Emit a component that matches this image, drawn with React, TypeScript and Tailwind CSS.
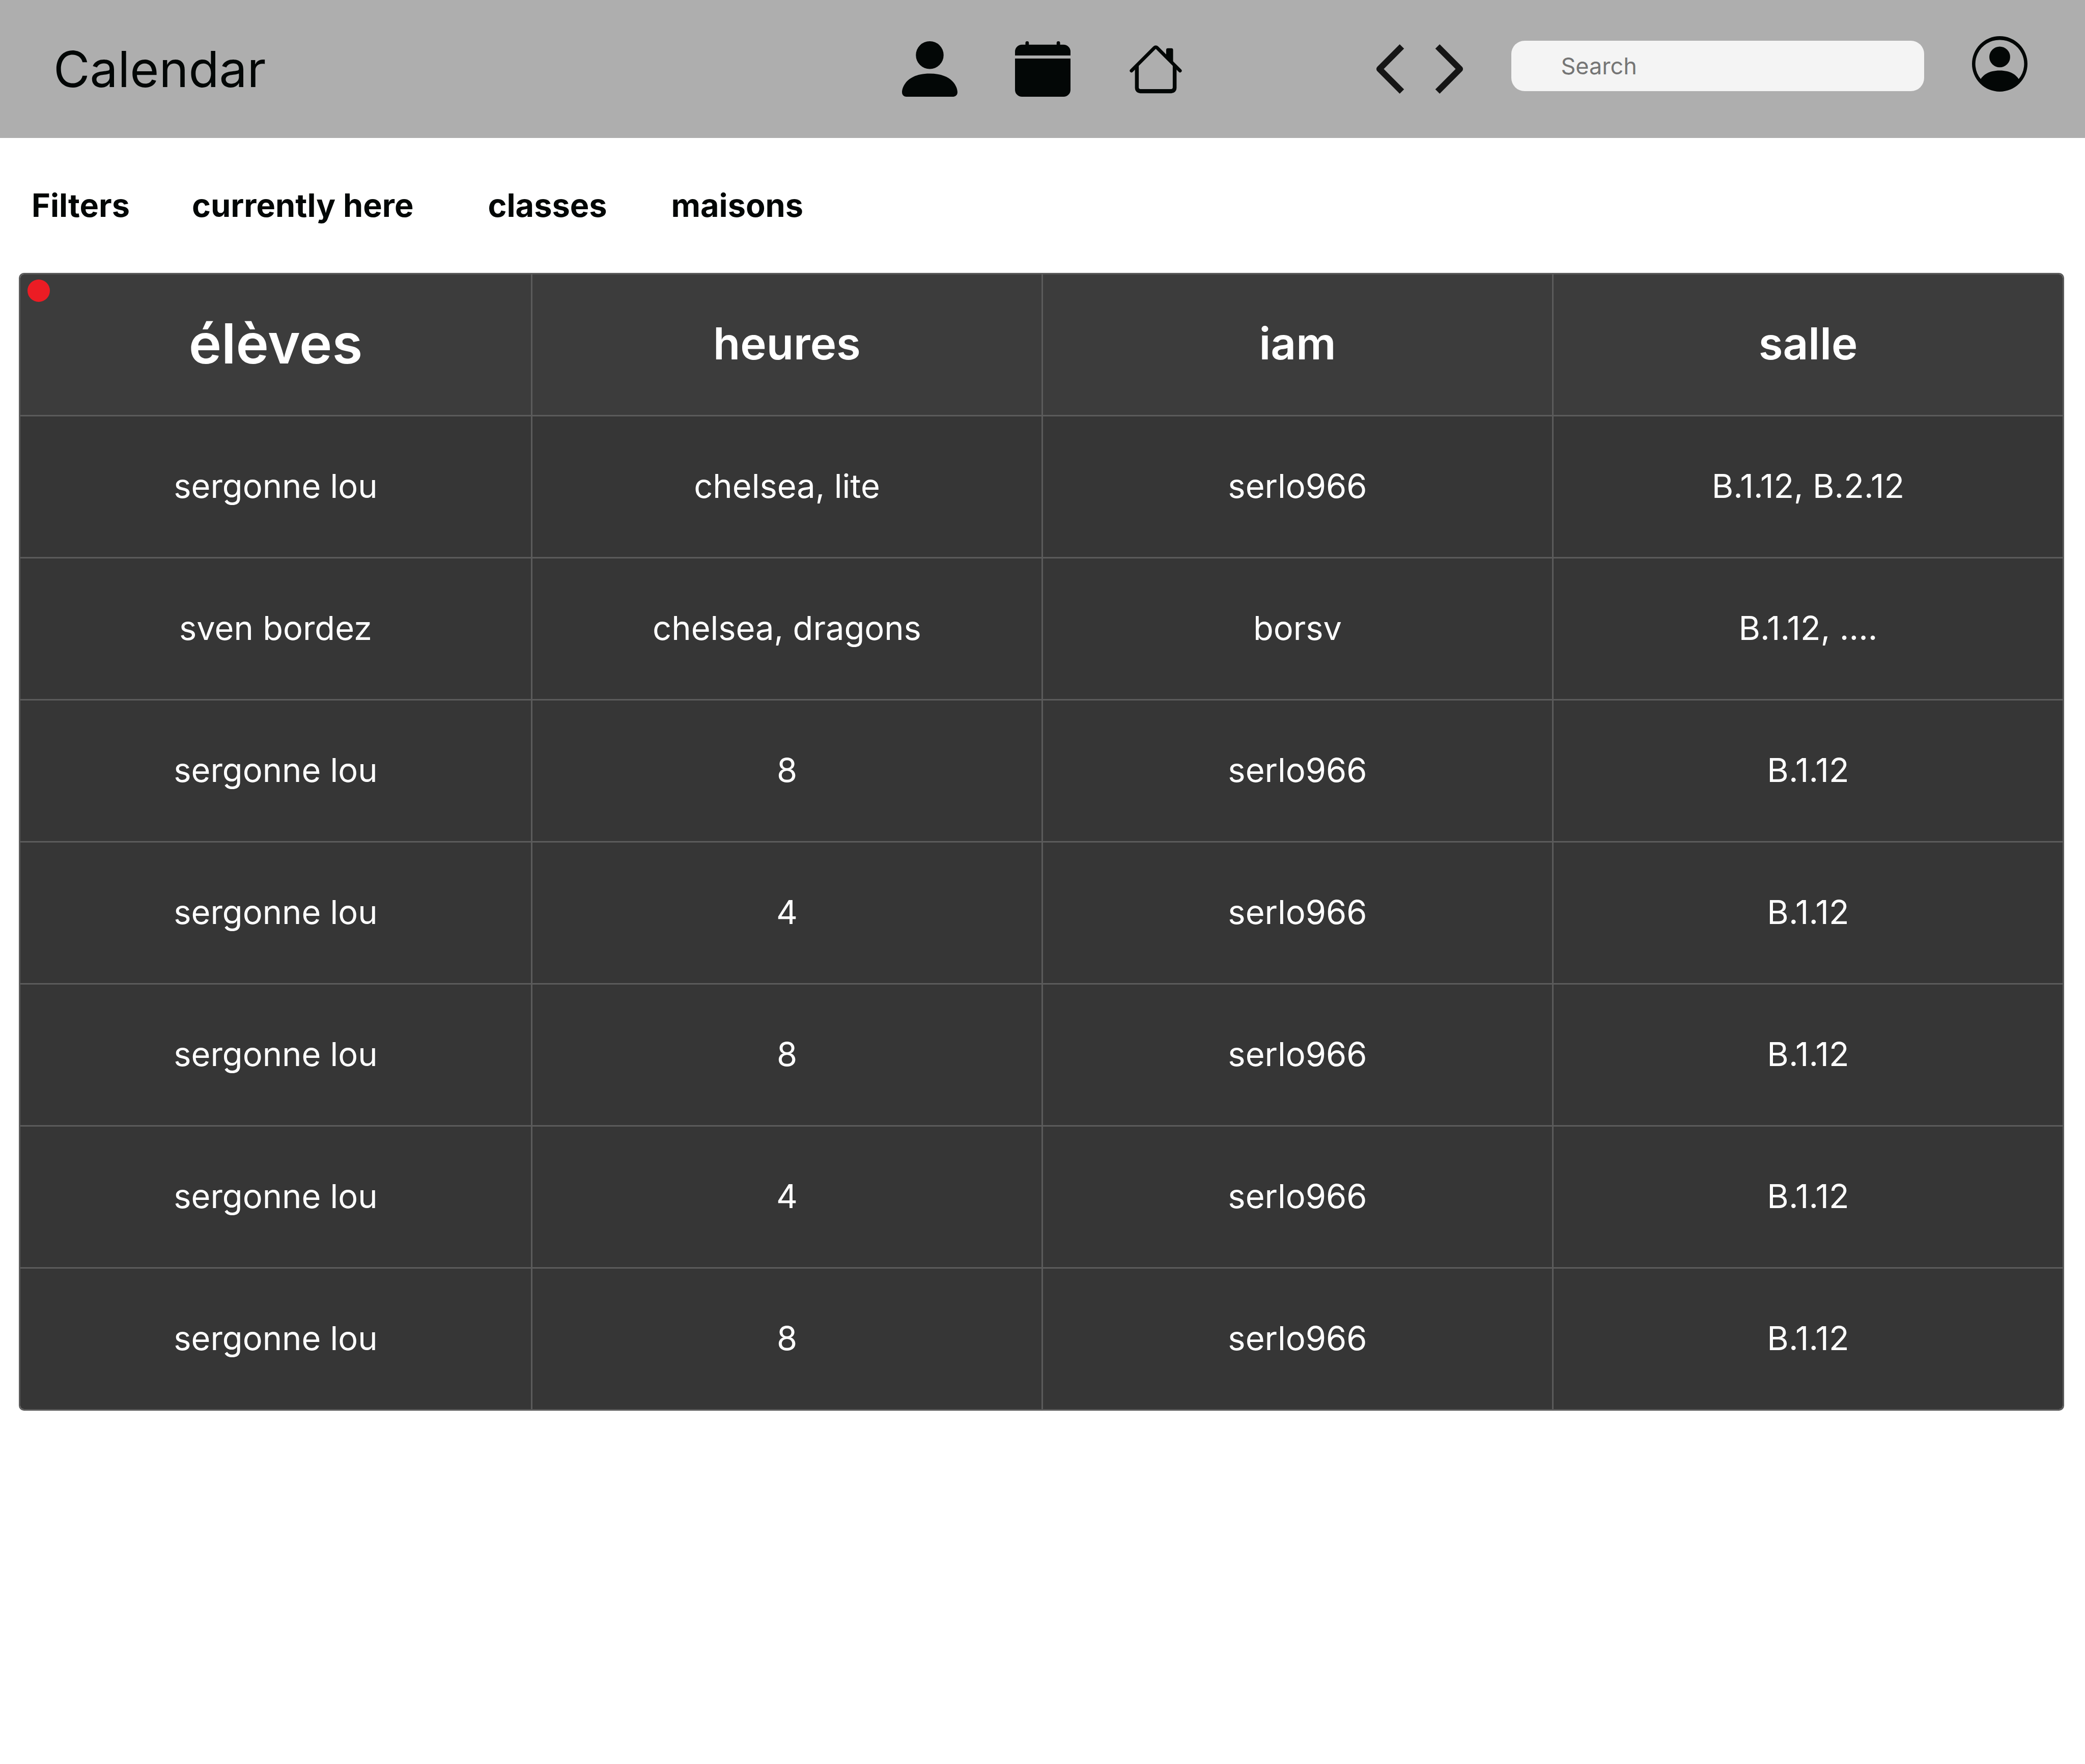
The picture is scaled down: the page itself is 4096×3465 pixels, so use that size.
import React from "react";

const rows = [
  ["sergonne lou", "chelsea, lite", "serlo966", "B.1.12, B.2.12"],
  ["sven bordez", "chelsea, dragons", "borsv", "B.1.12, ...."],
  ["sergonne lou", "8", "serlo966", "B.1.12"],
  ["sergonne lou", "4", "serlo966", "B.1.12"],
  ["sergonne lou", "8", "serlo966", "B.1.12"],
  ["sergonne lou", "4", "serlo966", "B.1.12"],
  ["sergonne lou", "8", "serlo966", "B.1.12"],
];

const headings = ["heures", "iam", "salle"];

function PersonIcon() {
  return (
    <svg viewBox="2 2 12 12" className="size-[109px] fill-[#030706]" aria-hidden="true">
      <path d="M3 14s-1 0-1-1 1-4 6-4 6 3 6 4-1 1-1 1H3zm5-6a3 3 0 1 0 0-6 3 3 0 0 0 0 6z" />
    </svg>
  );
}

function CalendarIcon() {
  return (
    <svg viewBox="0 0 16 16" className="size-[109px] fill-[#030706]" aria-hidden="true">
      <path d="M3.5 0a.5.5 0 0 1 .5.5V1h8V.5a.5.5 0 0 1 1 0V1h1a2 2 0 0 1 2 2v1.1H0V3a2 2 0 0 1 2-2h1V.5a.5.5 0 0 1 .5-.5z" />
      <path d="M0 5h16v9a2 2 0 0 1-2 2H2a2 2 0 0 1-2-2V5z" />
    </svg>
  );
}

function HouseIcon() {
  return (
    <svg viewBox="0 0 16 16" className="size-[109px] fill-[#030706]" fillRule="evenodd" aria-hidden="true">
      <path d="M2 13.5V7h1.1v6.3a.5.5 0 0 0 .5.5h8.8a.5.5 0 0 0 .5-.5V7H14v6.5a1.5 1.5 0 0 1-1.5 1.5h-9A1.5 1.5 0 0 1 2 13.5zm11-11V6l-2-2V2.5a.5.5 0 0 1 .5-.5h1a.5.5 0 0 1 .5.5z" />
      <path d="M7.293 1.5a1 1 0 0 1 1.414 0l6.647 6.646a.5.5 0 0 1-.708.708L8 2.207 1.354 8.854a.5.5 0 1 1-.708-.708L7.293 1.5z" />
    </svg>
  );
}

function ProfileIcon() {
  return (
    <svg viewBox="0 0 16 16" className="size-[109px] fill-[#030706]" fillRule="evenodd" aria-hidden="true">
      <path d="M11 6a3 3 0 1 1-6 0 3 3 0 0 1 6 0z" />
      <path d="M0 8a8 8 0 1 1 16 0A8 8 0 0 1 0 8zm8-6.9a6.9 6.9 0 0 0-5.468 11.27C3.242 11.226 4.805 9.9 8 9.9s4.757 1.325 5.468 2.47A6.9 6.9 0 0 0 8 1.1z" />
    </svg>
  );
}

function Chevron({ points }: { points: string }) {
  return (
    <svg viewBox="0 0 57 99" className="h-[97px] w-[56px] fill-none stroke-[#151515]" aria-hidden="true">
      <polyline points={points} strokeWidth="12.3" strokeLinejoin="round" />
    </svg>
  );
}

export default function App() {
  return (
    <div className="min-h-screen bg-white font-['Inter','Liberation_Sans',sans-serif] text-[#030706]">
      <header className="grid h-[271px] grid-cols-[minmax(0,1fr)_auto_minmax(0,1fr)] items-center bg-[#aeaeae]">
        <h1 className="pl-[105px] text-[98px] leading-none">Calendar</h1>
        <nav className="flex items-center gap-[113px]" aria-label="Main">
          <button type="button" aria-label="People"><PersonIcon /></button>
          <button type="button" aria-label="Calendar"><CalendarIcon /></button>
          <button type="button" aria-label="Home"><HouseIcon /></button>
        </nav>
        <div className="flex items-center pr-[113px] pl-[378px]">
          <div className="flex gap-[60px]">
            <button type="button" aria-label="Previous"><Chevron points="52,4.3 7,49.5 52,94.7" /></button>
            <button type="button" aria-label="Next"><Chevron points="5,4.3 50,49.5 5,94.7" /></button>
          </div>
          <input
            type="search"
            aria-label="Search"
            placeholder="Search"
            className="mx-[94px] mb-3 h-[99px] min-w-0 flex-1 rounded-[26px] bg-[#f4f4f4] px-[98px] text-[45px] placeholder:text-[#757575]"
          />
          <button type="button" aria-label="Profile" className="mb-5"><ProfileIcon /></button>
        </div>
      </header>

      <div className="flex h-[265px] items-center pl-[62px] text-[63px] font-bold">
        <span className="mr-[122px]">Filters</span>
        <button type="button" className="mr-[146px]">currently here</button>
        <button type="button" className="mr-[126px]">classes</button>
        <button type="button">maisons</button>
      </div>

      <main className="relative mr-[41px] ml-[37px] overflow-hidden rounded-[10px] border-[3px] border-[#5b5b5b]">
        <span className="absolute top-2.5 left-3.5 size-[44px] rounded-full bg-[#ec1c24]" />
        <table className="w-full table-fixed border-separate border-spacing-0 text-white">
          <thead>
            <tr className="h-[276px] bg-[#3c3c3c] text-[87px]">
              <th scope="col" className="p-0 pb-1 text-center text-[109px] font-semibold">élèves</th>
              {headings.map((heading) => (
                <th key={heading} scope="col" className="border-l-[3px] border-[#5b5b5b] p-0 pb-1 text-center font-semibold">
                  {heading}
                </th>
              ))}
            </tr>
          </thead>
          <tbody>
            {rows.map((row, i) => (
              <tr key={i} className="h-[279px] bg-[#363636] text-[65px]">
                {row.map((text, j) => (
                  <td
                    key={j}
                    className="border-t-[3px] border-l-[3px] border-[#5b5b5b] p-0 pb-0.5 text-center align-middle first:border-l-0"
                  >
                    {text}
                  </td>
                ))}
              </tr>
            ))}
          </tbody>
        </table>
      </main>
    </div>
  );
}
